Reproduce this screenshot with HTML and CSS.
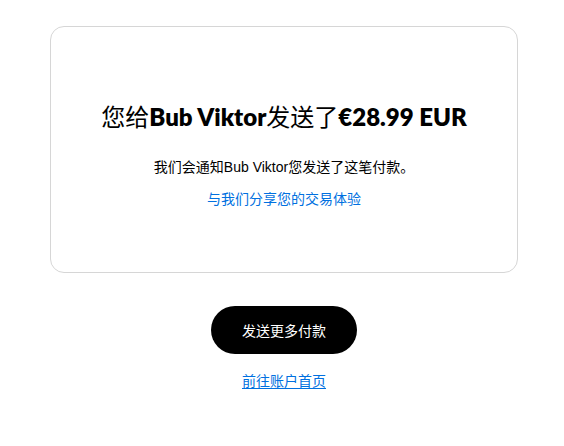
FILE: index.html
```html
<!DOCTYPE html>
<html lang="zh-CN">
<head>
<meta charset="utf-8">
<title>付款已发送</title>
<link rel="stylesheet" href="styles.css">
</head>
<body>
<main class="page">
  <section class="card">
    <h1 class="title">您给<b class="strong">Bub Viktor</b>发送了<b class="strong">€28.99 EUR</b></h1>
    <p class="notice">我们会通知Bub Viktor您发送了这笔付款。</p>
    <a class="share" href="#">与我们分享您的交易体验</a>
  </section>
  <a class="btn" href="#">发送更多付款</a>
  <a class="home" href="#">前往账户首页</a>
</main>
</body>
</html>
```
FILE: styles.css
```css
* { box-sizing: border-box; }
html, body { margin: 0; padding: 0; background: #fff; }
body {
  font-family: "Liberation Sans", "Noto Sans CJK SC", sans-serif;
  color: #000;
}
.page {
  display: flex;
  flex-direction: column;
  align-items: center;
  padding: 26px 0 0 4px;
}
.card {
  width: 468px;
  height: 247px;
  border: 1px solid #d6d6d6;
  border-radius: 14px;
  display: flex;
  flex-direction: column;
  align-items: center;
  padding-top: 73px;
}
.title {
  margin: 0;
  font-size: 24px;
  line-height: 32px;
  font-weight: 400;
  font-family: "Noto Sans CJK SC", sans-serif;
  white-space: nowrap;
}
.strong {
  font-family: "Lato", "Noto Sans CJK SC", sans-serif;
  font-weight: 800;
}
.notice {
  margin: 24px 0 0;
  font-size: 14px;
  line-height: 20px;
}
.share {
  margin-top: 12px;
  font-size: 14px;
  line-height: 20px;
  color: #0070e0;
  text-decoration: none;
}
.btn {
  margin-top: 33px;
  width: 146px;
  height: 48px;
  border-radius: 24px;
  background: #000;
  color: #fff;
  font-size: 14px;
  display: flex;
  align-items: center;
  justify-content: center;
  text-decoration: none;
}
.home {
  margin-top: 17px;
  font-size: 14px;
  line-height: 20px;
  color: #0070e0;
  text-decoration: underline;
  text-underline-offset: 2px;
}
```
